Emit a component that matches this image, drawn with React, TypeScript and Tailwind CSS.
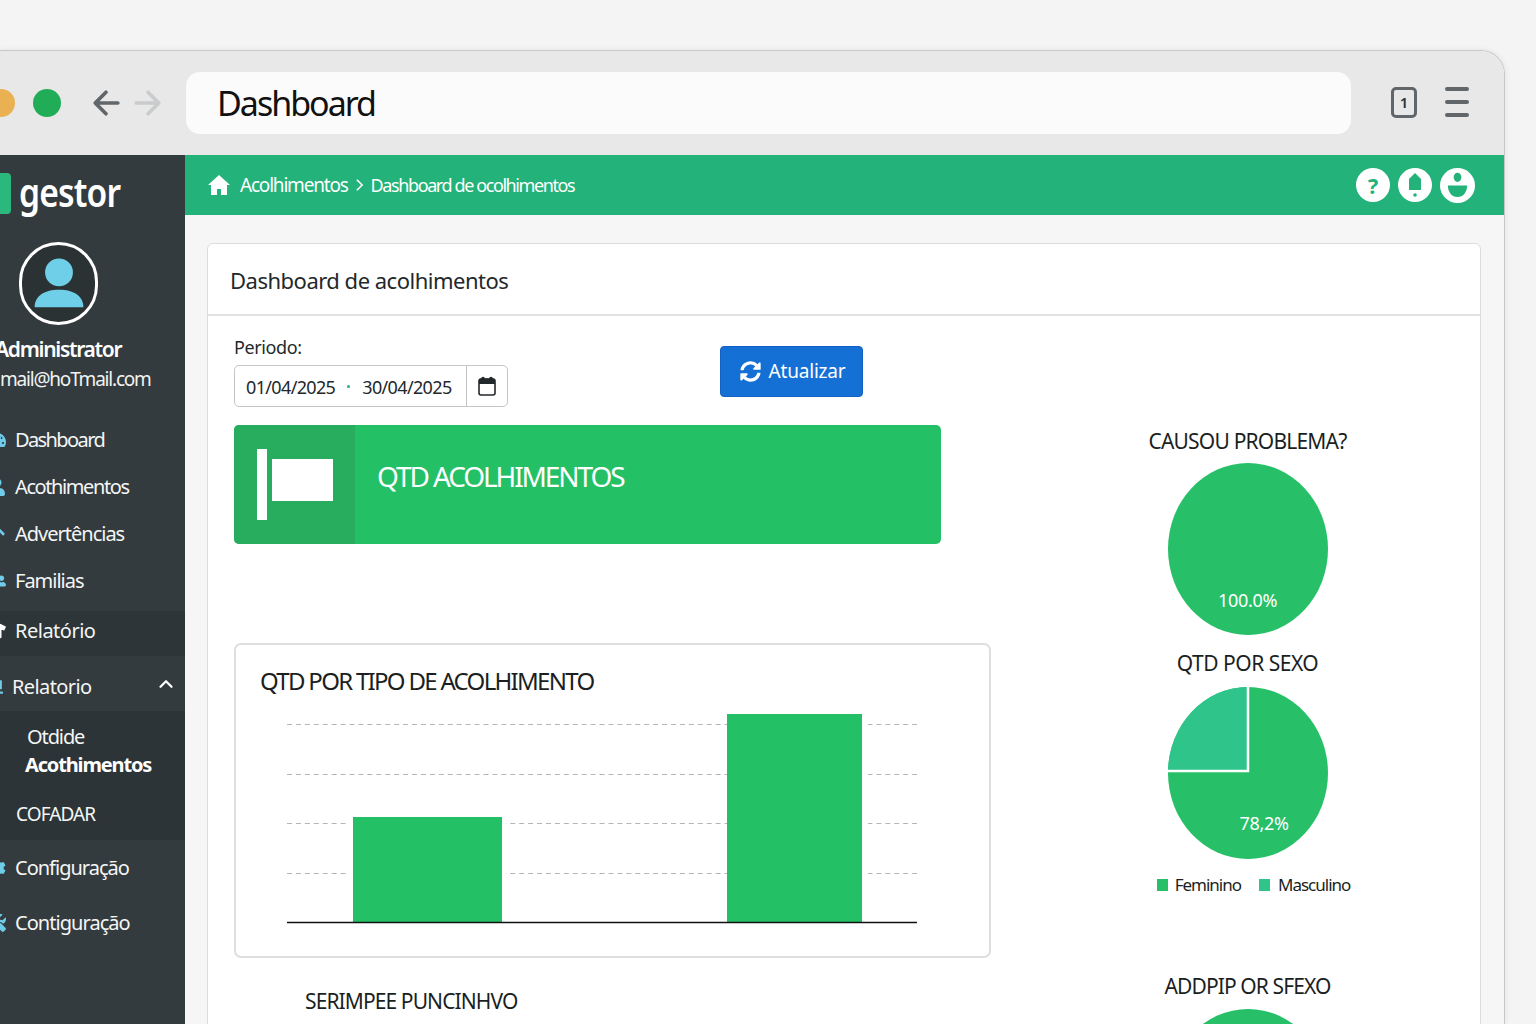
import type { ReactNode } from "react";
import { ChevronUp } from "lucide-react";
import { FaSyncAlt, FaTachometerAlt, FaUser, FaArrowUp, FaUserFriends, FaTshirt, FaChartBar, FaCog, FaTools } from "react-icons/fa";

const font = "font-['Noto_Sans','Liberation_Sans',sans-serif]";

function NavItem({ icon, label, className = "" }: { icon: ReactNode; label: string; className?: string }) {
  return (
    <div className={`flex items-center text-[20px] text-[#f4f6f6] ${className}`}>
      <span className="-ml-[12px] mr-[9px] flex w-[18px] justify-center text-[#6fcbe8]">{icon}</span>
      {label}
    </div>
  );
}

function Sidebar() {
  return (
    <aside className="flex w-[185px] shrink-0 flex-col overflow-hidden bg-[#343b3e]">
      <div className="mt-[18px] flex h-[41px] items-center">
        <div className="h-[41px] w-[11px] rounded-r-[4px] bg-[#2ab87c]" />
        <span className="-mt-[3px] ml-[8px] origin-left scale-x-[0.84] text-[40px] font-semibold tracking-[-1px] text-white">gestor</span>
      </div>
      <div className="mt-[28px] ml-[19px] flex h-[83px] w-[79px] items-center justify-center rounded-full border-[3px] border-white bg-[#2b3234]">
        <svg viewBox="0 0 50 56" className="h-[66px] w-[58px]">
          <circle cx="25" cy="18" r="12" fill="#6fcfe9" />
          <path d="M4 48c0-10 9-15 21-15s21 5 21 15z" fill="#6fcfe9" />
        </svg>
      </div>
      <div className="mt-[9px] -ml-[5px] h-[30px] whitespace-nowrap text-[21px] leading-[30px] font-semibold tracking-[-1.3px] text-white">Administrator</div>
      <div className="h-[28px] whitespace-nowrap text-[19px] leading-[30px] tracking-[-1.2px] text-[#f1f3f3]">mail@hoTmail.com</div>
      <nav className="mt-[24px] flex flex-col">
        <NavItem className="h-[47px] tracking-[-1.6px]" icon={<FaTachometerAlt size={18} />} label="Dashboard" />
        <NavItem className="h-[47px] tracking-[-1.4px]" icon={<FaUser size={18} />} label="Acothimentos" />
        <NavItem className="h-[47px] tracking-[-1px]" icon={<FaArrowUp size={18} />} label="Advertências" />
        <NavItem className="h-[47px] tracking-[-1px]" icon={<FaUserFriends size={18} />} label="Familias" />
        <NavItem className="mt-[7px] h-[45px] bg-[#2e3538] pb-[5px] tracking-[-0.5px] [&>span]:text-white" icon={<FaTshirt size={18} />} label="Relatório" />
        <div className="flex h-[55px] items-center pt-[6px] pr-[8px] text-[20px] tracking-[-0.6px] text-[#f4f6f6]">
          <span className="-ml-[15px] mr-[9px] flex w-[18px] justify-center text-[#6fcbe8]"><FaChartBar size={18} /></span>
          Relatorio
          <ChevronUp className="-mt-[6px] ml-auto h-[22px] w-[22px] text-white" strokeWidth={2.5} />
        </div>
        <div className="flex h-[129px] flex-col bg-[#2d3437] text-[#f4f6f6]">
          <div className="mt-[12px] pl-[27px] text-[20px] leading-[28px] tracking-[-1.1px]">Otdide</div>
          <div className="pl-[25px] text-[20px] leading-[28px] font-bold tracking-[-1.15px] text-white">Acothimentos</div>
          <div className="mt-[21px] pl-[16px] text-[19px] leading-[28px] tracking-[-0.9px]">COFADAR</div>
        </div>
        <NavItem className="h-[55px] tracking-[-1px]" icon={<FaCog size={18} />} label="Configuração" />
        <NavItem className="h-[55px] tracking-[-0.95px]" icon={<FaTools size={18} />} label="Contiguração" />
      </nav>
    </aside>
  );
}

function TopBar() {
  return (
    <header className="flex h-[104px] shrink-0 items-center bg-[#e8e8e8]">
      <span className="-ml-[13px] h-[28px] w-[28px] rounded-full bg-[#eab153]" />
      <span className="ml-[18px] h-[28px] w-[28px] rounded-full bg-[#21ad58]" />
      <svg viewBox="0 0 26 26" className="ml-[31px] h-[30px] w-[28px]" fill="none" stroke="#60666a" strokeWidth="3.4" strokeLinecap="round" strokeLinejoin="round">
        <path d="M24 13H3M13 3 3 13l10 10" />
      </svg>
      <svg viewBox="0 0 26 26" className="ml-[14px] h-[30px] w-[28px]" fill="none" stroke="#c9cbcc" strokeWidth="3.4" strokeLinecap="round" strokeLinejoin="round">
        <path d="M2 13h21M13 3l10 10-10 10" />
      </svg>
      <div className="ml-[24px] flex h-[62px] w-[1165px] items-center rounded-[14px] bg-[#fbfbfb] pl-[31px] text-[34px] tracking-[-2px] text-[#111]">Dashboard</div>
      <div className="-mt-[2px] ml-[40px] flex h-[31px] w-[26px] items-center justify-center rounded-[5px] border-[3px] border-[#60666a] text-[15px] font-semibold text-[#333]">1</div>
      <div className="-mt-[2px] ml-[28px] flex h-[30px] w-[24px] flex-col justify-between">
        <span className="h-[4px] rounded-full bg-[#60666a]" />
        <span className="h-[4px] rounded-full bg-[#60666a]" />
        <span className="h-[4px] rounded-full bg-[#60666a]" />
      </div>
    </header>
  );
}

function GreenBar() {
  return (
    <div className="flex h-[60px] shrink-0 items-center bg-[#23b27a] pl-[22px] text-white">
      <svg viewBox="0 0 24 22" className="h-[22px] w-[24px]" fill="#fff">
        <path d="M12 1 1 11h3v10h6v-6h4v6h6V11h3z" />
      </svg>
      <span className="ml-[9px] text-[19px] tracking-[-1.2px]">Acolhimentos</span>
      <svg viewBox="0 0 8 14" className="ml-[8px] h-[14px] w-[7px]" fill="none" stroke="#fff" strokeWidth="2"><path d="m1 1 6 6-6 6" /></svg>
      <span className="ml-[8px] text-[18px] tracking-[-1.4px]">Dashboard de ocolhimentos</span>
      <div className="mr-[29px] ml-auto flex items-center gap-[8px]">
        <span className="flex h-[34px] w-[34px] items-center justify-center rounded-full bg-white text-[22px] font-bold text-[#23b27a]">?</span>
        <span className="flex h-[34px] w-[34px] items-center justify-center rounded-full bg-white">
          <svg viewBox="0 0 20 26" className="h-[26px] w-[20px]" fill="#23b27a">
            <path d="M10 1l6 6v11H4V7z" />
            <circle cx="10" cy="23" r="1.8" />
          </svg>
        </span>
        <span className="flex h-[35px] w-[35px] items-center justify-center rounded-full bg-white">
          <svg viewBox="0 0 24 28" className="h-[27px] w-[23px]" fill="#23b27a">
            <ellipse cx="12" cy="5.5" rx="4" ry="4.8" />
            <path d="M2 14h20c0 7-4 12-10 12S2 21 2 14z" />
          </svg>
        </span>
      </div>
    </div>
  );
}

function BarChart() {
  return (
    <svg viewBox="0 0 630 210" className="mt-[24px] ml-[51px] h-[210px] w-[630px] overflow-visible">
      {[2, 52, 101, 151].map((y) => (
        <line key={y} x1="0" x2="630" y1={y + 0.5} y2={y + 0.5} stroke="#b5b5b5" strokeDasharray="5 3.93" />
      ))}
      <rect x="60" y="95" width="159" height="105" fill="#fff" />
      <rect x="440" y="-8" width="141" height="208" fill="#fff" />
      <rect x="66" y="95" width="149" height="105" fill="#24c066" />
      <rect x="440" y="-8" width="135" height="208" fill="#24c066" />
      <line x1="0" x2="630" y1="200.5" y2="200.5" stroke="#111" strokeWidth="1.5" />
    </svg>
  );
}

function Pie({ children, split }: { children: ReactNode; split?: boolean }) {
  return (
    <div className="relative h-[172px] w-[160px]">
      <svg viewBox="0 0 160 172" className="h-[172px] w-[160px]">
        <ellipse cx="80" cy="86" rx="80" ry="86" fill="#27c069" />
        {split && <path d="M80 0A80 86 0 0 0 0 84H80z" fill="#2ec48a" />}
        {split && <path d="M80 0V84H0" fill="none" stroke="#fff" strokeWidth="2.5" />}
      </svg>
      {children}
    </div>
  );
}

function ChartTitle({ children, className = "" }: { children: ReactNode; className?: string }) {
  return <div className={`h-[28px] text-center text-[21px] leading-[28px] whitespace-nowrap text-[#1b1f22] ${className}`}>{children}</div>;
}

function Card() {
  return (
    <section className="mt-[28px] mr-[23px] ml-[22px] flex-1 rounded-t-[6px] border border-[#dcdcdc] bg-white">
      <div className="flex h-[72px] items-center border-b-2 border-[#e2e2e2] pt-[2px] pl-[22px] text-[22px] tracking-[-0.5px] text-[#23282b]">Dashboard de acolhimentos</div>
      <div className="flex">
        <div className="ml-[26px] w-[757px] shrink-0">
          <div className="flex pt-[19px]">
            <div className="w-[274px]">
              <div className="h-[24px] text-[18px] leading-[24px] tracking-[-0.4px] text-[#23282b]">Periodo:</div>
              <div className="mt-[6px] flex h-[42px] items-center rounded-[5px] border border-[#c5c5c5] text-[18px] tracking-[-0.65px] text-[#23282b]">
                <span className="mt-[2px] ml-[11px]">01/04/2025</span>
                <span className="ml-[12px] h-[3px] w-[3px] rounded-full bg-[#23b27a]" />
                <span className="mt-[2px] ml-[12px]">30/04/2025</span>
                <span className="ml-[14px] flex h-full flex-1 items-center justify-center border-l border-[#c5c5c5]">
                  <svg viewBox="0 0 18 20" className="h-[20px] w-[18px]">
                    <rect x="1" y="3" width="16" height="16" rx="2" fill="#fff" stroke="#23282b" strokeWidth="1.6" />
                    <path d="M1 8V4.500a2 2 0 0 1 2-2h12a2 2 0 0 1 2 2V8z" fill="#23282b" />
                    <circle cx="5" cy="2.500" r="1.800" fill="#23282b" />
                    <circle cx="13" cy="2.500" r="1.800" fill="#23282b" />
                  </svg>
                </span>
              </div>
            </div>
            <button type="button" className="mt-[11px] ml-[212px] flex h-[51px] w-[143px] items-center justify-center gap-[8px] rounded-[4px] border border-[#1160c4] bg-[#1570d6] pl-[2px] text-[19px] tracking-[-0.2px] text-white">
              <FaSyncAlt size={21} />
              Atualizar
            </button>
          </div>
          <div className="mt-[18px] flex h-[119px] w-[707px] overflow-hidden rounded-[5px] bg-[#24c066] text-white">
            <div className="flex w-[121px] items-center justify-center bg-[#28ad5f]">
              <svg viewBox="0 0 76 71" className="h-[71px] w-[76px]" fill="#fff">
                <rect x="0" y="0" width="10" height="71" />
                <rect x="15" y="10" width="61" height="42" />
              </svg>
            </div>
            <div className="mt-[32px] ml-[22px] text-[28px] leading-[38px] tracking-[-2.1px]">QTD ACOLHIMENTOS</div>
          </div>
          <div className="mt-[99px] h-[315px] rounded-[7px] border-2 border-[#dedede] pt-[19px]">
            <div className="pl-[24px] text-[24px] leading-[34px] tracking-[-1.7px] text-[#1b1f22]">QTD POR TIPO DE ACOLHIMENTO</div>
            <BarChart />
          </div>
          <div className="mt-[28px] pl-[71px] text-[21px] leading-[30px] tracking-[-0.9px] text-[#1b1f22]">SERIMPEE PUNCINHVO</div>
        </div>
        <div className="ml-[24px] flex flex-1 flex-col items-center pt-[111px]">
          <ChartTitle className="tracking-[-0.8px]">CAUSOU PROBLEMA?</ChartTitle>
          <div className="mt-[8px]">
            <Pie>
              <span className="absolute top-[126px] left-0 w-full text-center text-[18px] leading-[22px] tracking-[-0.3px] text-white">100.0%</span>
            </Pie>
          </div>
          <ChartTitle className="mt-[14px] tracking-[-0.5px]">QTD POR SEXO</ChartTitle>
          <div className="mt-[10px]">
            <Pie split>
              <span className="absolute top-[125px] left-[72px] text-[18px] leading-[22px] tracking-[-0.3px] text-white">78,2%</span>
            </Pie>
          </div>
          <div className="mt-[14px] ml-[12px] flex h-[24px] items-center text-[17px] tracking-[-1px] text-[#1b1f22]">
            <span className="h-[12px] w-[11px] bg-[#27c069]" />
            <span className="ml-[7px]">Feminino</span>
            <span className="ml-[18px] h-[12px] w-[11px] bg-[#2ec48a]" />
            <span className="ml-[8px]">Masculino</span>
          </div>
          <ChartTitle className="mt-[75px] tracking-[-0.9px]">ADDPIP OR SFEXO</ChartTitle>
          <div className="mt-[9px]">
            <Pie>{null}</Pie>
          </div>
        </div>
      </div>
    </section>
  );
}

export default function App() {
  return (
    <div className={`h-screen overflow-hidden bg-[#f4f4f4] pt-[50px] pr-[31px] ${font}`}>
      <div className="flex h-[974px] flex-col overflow-hidden rounded-tr-[24px] border-t border-r border-[#c8c8c8] shadow-[0_0_6px_rgba(0,0,0,0.08)]">
        <TopBar />
        <div className="flex min-h-0 flex-1">
          <Sidebar />
          <main className="flex min-w-0 flex-1 flex-col bg-[#f6f6f6]">
            <GreenBar />
            <Card />
          </main>
        </div>
      </div>
    </div>
  );
}
